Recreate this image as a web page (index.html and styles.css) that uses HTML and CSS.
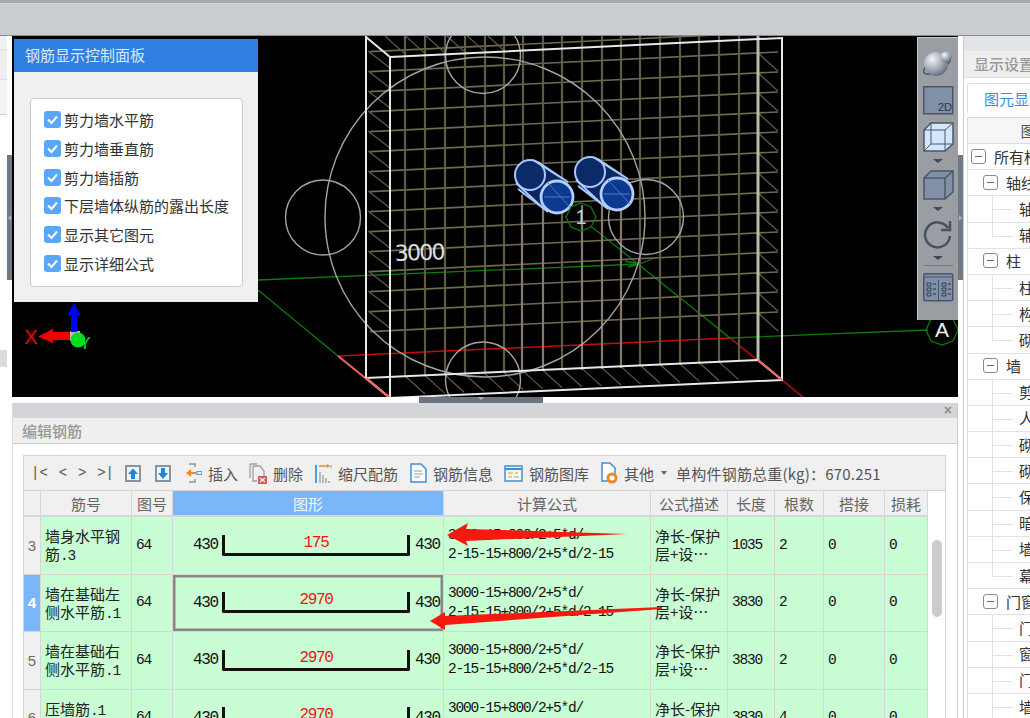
FILE: index.html
```html
<!DOCTYPE html>
<html lang="zh-CN">
<head>
<meta charset="utf-8">
<title>编辑钢筋</title>
<link rel="stylesheet" href="styles.css">
</head>
<body>
<div class="app">
  <div class="topbar"></div>
  <div class="main">
    <div class="rail">
      <div class="rail-a"></div><div class="rail-b"></div><div class="rail-c"></div>
      <div class="rail-d"></div><div class="rail-e"></div><div class="rail-f"></div>
    </div>
    <div class="vsplit"><div class="vhandle"><i class="tri-l"></i></div></div>
    <div class="center">
      <div class="viewport">
        <svg class="scene" viewBox="12 36 946 361" width="946" height="361">
          <defs>
            <g id="cyl">
              <polygon points="538,162 568,182 548,212 518,189" fill="#0b2660"/>
              <circle cx="530" cy="175" r="15" fill="#0c2a68" stroke="#a9c8ff" stroke-width="2"/>
              <path d="M538 162L568 182M518 189L548 212M533 160L563 179M516 183L544 209" stroke="#a9c8ff" stroke-width="1.800" fill="none"/>
              <circle cx="557" cy="197" r="16" fill="#0d3a90" stroke="#b2cffc" stroke-width="2.800"/>
              <path d="M548 183L570 207M544 197H570" stroke="#4f74c0" stroke-width="1" fill="none"/>
            </g>
            <radialGradient id="ball" cx=".35" cy=".3" r=".8">
              <stop offset="0" stop-color="#f4f6f8"/><stop offset=".6" stop-color="#98a2b0"/><stop offset="1" stop-color="#56606e"/>
            </radialGradient>
          </defs>
          <path class="g-red" d="M338 356L730 338M730 338L803 397"/>
          <path class="g-pink" d="M338 356L390 398"/>
          <path class="g-green" d="M258 280L640 264M258 290L338 356M592 227L730 338L928 330M628 267L640 264L625 261M640 264L652 259"/>
          <path class="g-bar" d="M370 51.6l408-19.6m-408 39.6l408-19.6m-408 39.6l408-19.6m-408 39.6l408-19.6m-408 39.6l408-19.6m-408 39.6l408-19.6m-408 39.6l408-19.6m-408 39.6l408-19.6m-408 39.6l408-19.6m-408 39.6l408-19.6m-408 39.6l408-19.6m-408 39.6l408-19.6m-408 39.6l408-19.6m-408 39.6l408-19.6m-408 39.6l408-19.6"/>
          <path class="g-thin" d="M368 51l22 17m-22 3l22 17m-22 3l22 17m-22 3l22 17m-22 3l22 17m-22 3l22 17m-22 3l22 17m-22 3l22 17m-22 3l22 17m-22 3l22 17m-22 3l22 17m-22 3l22 17m-22 3l22 17m-22 3l22 17M758 53l20 18m-20 2l20 18m-20 2l20 18m-20 2l20 18m-20 2l20 18m-20 2l20 18m-20 2l20 18m-20 2l20 18m-20 2l20 18m-20 2l20 18m-20 2l20 18m-20 2l20 18m-20 2l20 18m-20 2l20 18M385 36l20 18m-.4-18.9l20 18m-.4-18.9l20 18m-.4-18.9l20 18m-.4-18.9l20 18m-.4-18.9l20 18M405 376l20 18m-.4-18.9l20 18m-.4-18.9l20 18m-.4-18.9l20 18m-.4-18.9l20 18m-.4-18.9l20 18m-.4-18.9l20 18m-.4-18.9l20 18m-.4-18.9l20 18m-.4-18.9l20 18m-.4-18.9l20 18m-.4-18.9l20 18m-.4-18.9l20 18m-.4-18.9l20 18m-.4-18.9l20 18m-.4-18.9l20 18m-.4-18.9l20 18"/>
          <path class="g-vert" d="M405 36V376M425 36V375M445 36V374M465 36V373M485 36V372M504 36V371M562 36V368M640 36V365M660 36V364M680 36V363M699 36V362M719 36V361M739 36V360M523 36V195M543 36V195M582 36V190M602 36V190M621 36V210"/>
          <path class="g-pale" d="M522 195V372M543 205V371M582 205V370M602 205V369M621 210V368"/>
          <path class="g-side" d="M758 36V360"/>
          <g class="g-circ">
            <circle cx="485" cy="217" r="160"/>
            <circle cx="323" cy="217.5" r="37.5"/>
            <circle cx="483" cy="56" r="37.5"/>
            <circle cx="483" cy="379.5" r="37.5"/>
            <circle cx="646" cy="217" r="37.5"/>
          </g>
          <path class="g-box" d="M390 57L782 38V380L390 398ZM366 36V378L758 360M366 37L390 57M366 378L390 398M758 360L782 380"/>
          <path class="g-pink" d="M366 378L390 398M758 360L782 380"/>
          <use href="#cyl"/>
          <use href="#cyl" x="60" y="-3"/>
          <polygon class="g-ring" points="581,203 591,207 596,217 591,227 581,231 571,227 566,217 571,207"/>
          <text class="t-one" x="581" y="224">1</text>
          <text class="t-dim" x="395" y="261" transform="rotate(-2 395 261)">3000</text>
          <polygon class="g-ring" points="942,315 953,319 958,330 953,341 942,345 931,341 926,330 931,319"/>
          <text class="t-a" x="942" y="337">A</text>
          <rect x="70" y="331" width="10" height="10" fill="#b9b9b9"/>
          <path d="M70 332H53V329L38 336.500L53 343V340H70Z" fill="#f20000"/>
          <path d="M71 332V315H67.500L74 303L80.500 315H77V332Z" fill="#0000f0"/>
          <circle cx="78" cy="340" r="7.500" fill="#00e020"/>
          <text class="t-x" x="31" y="344">X</text>
          <text class="t-y" x="85" y="349">Y</text>
        </svg>
        <section class="ctrl">
          <h2 class="ctrl-title">钢筋显示控制面板</h2>
          <div class="ctrl-body">
            <div class="ctrl-box">
              <label class="ck"><span class="ck-box"><svg viewBox="0 0 17 17"><path d="M4 8.500L7.500 12L13 5.500"/></svg></span>剪力墙水平筋</label>
              <label class="ck"><span class="ck-box"><svg viewBox="0 0 17 17"><path d="M4 8.500L7.500 12L13 5.500"/></svg></span>剪力墙垂直筋</label>
              <label class="ck"><span class="ck-box"><svg viewBox="0 0 17 17"><path d="M4 8.500L7.500 12L13 5.500"/></svg></span>剪力墙插筋</label>
              <label class="ck"><span class="ck-box"><svg viewBox="0 0 17 17"><path d="M4 8.500L7.500 12L13 5.500"/></svg></span>下层墙体纵筋的露出长度</label>
              <label class="ck"><span class="ck-box"><svg viewBox="0 0 17 17"><path d="M4 8.500L7.500 12L13 5.500"/></svg></span>显示其它图元</label>
              <label class="ck"><span class="ck-box"><svg viewBox="0 0 17 17"><path d="M4 8.500L7.500 12L13 5.500"/></svg></span>显示详细公式</label>
            </div>
          </div>
        </section>
        <aside class="tools">
          <svg class="ti ti-a" viewBox="0 0 34 30" width="34" height="30">
            <ellipse cx="16" cy="17" rx="15" ry="6" fill="none" stroke="#4b5563" stroke-width="1.500" transform="rotate(-30 16 17)"/>
            <circle cx="15" cy="16" r="12" fill="url(#ball)"/>
            <circle cx="25" cy="9" r="5.500" fill="url(#ball)"/>
          </svg>
          <svg class="ti ti-b" viewBox="0 0 31 29" width="31" height="29">
            <rect x=".75" y=".75" width="29" height="27" fill="#8090a8" stroke="#4c5666" stroke-width="1.500"/>
            <text class="t-2d" x="15" y="25">2D</text>
          </svg>
          <svg class="ti ti-c" viewBox="0 0 31 30" width="31" height="30">
            <path d="M1 8L8 1H30V22L22 29H1Z" fill="#d3e6fc" stroke="#4c5666" stroke-width="1.500"/>
            <path d="M1 8H22V29M22 8L30 1M8 1V22H30M8 22L1 29" fill="none" stroke="#4c5666" stroke-width="1"/>
          </svg>
          <i class="tri-d"></i>
          <svg class="ti ti-d" viewBox="0 0 31 30" width="31" height="30">
            <path d="M1 8L8 1H30V22L22 29H1Z" fill="#8090a8" stroke="#4c5666" stroke-width="1.500"/>
            <path d="M1 8H22V29M22 8L30 1" fill="none" stroke="#4c5666" stroke-width="1.500"/>
          </svg>
          <i class="tri-d"></i>
          <svg class="ti ti-e" viewBox="0 0 30 30" width="30" height="30">
            <path d="M25 9A12.500 12.500 0 1 0 27 17" fill="none" stroke="#475160" stroke-width="2.500"/>
            <path d="M27 2V11H18" fill="none" stroke="#475160" stroke-width="2.500"/>
          </svg>
          <i class="tri-d"></i>
          <div class="tools-rule"></div>
          <svg class="ti ti-f" viewBox="0 0 31 29" width="31" height="29">
            <rect x=".75" y=".75" width="29" height="27" rx="1.500" fill="#8090a8" stroke="#4c5666" stroke-width="1.500"/>
            <path d="M1 4H30M15.500 7V27" stroke="#4c5666" stroke-width="1" fill="none"/>
            <path d="M4 10h4v3h-4zM4 15h4v3h-4zM4 20h4v3h-4zM19 10h4v3h-4zM19 15h4v3h-4zM19 20h4v3h-4z" fill="none" stroke="#27303c" stroke-width=".8"/>
            <path d="M10 11h3M10 16h3M10 21h3M25 11h3M25 16h3M25 21h3" stroke="#27303c" stroke-width="1"/>
          </svg>
        </aside>
      </div>
      <div class="hsplit"><div class="hhandle"><i class="tri-s"></i></div></div>
      <section class="editor">
        <div class="ed-strip"><span class="ed-close">×</span></div>
        <h2 class="ed-head">编辑钢筋</h2>
        <div class="ed-body">
          <div class="sheet">
            <div class="sheet-bar">
              <div class="nav"><span>|&lt;</span><span>&lt;</span><span>&gt;</span><span>&gt;|</span></div>
              <svg class="ib" viewBox="0 0 16 17" width="16" height="17"><rect x="1" y="1" width="14" height="15" fill="#eef3f8" stroke="#8a939b" stroke-width="2"/><path d="M8 3.500L3 9H6V14H10V9H13Z" fill="#1f86d8"/></svg>
              <svg class="ib" viewBox="0 0 16 17" width="16" height="17"><rect x="1" y="1" width="14" height="15" fill="#eef3f8" stroke="#8a939b" stroke-width="2"/><path d="M8 14L3 8H6V3H10V8H13Z" fill="#1f86d8"/></svg>
              <span class="bt"><svg viewBox="0 0 17 20" width="17" height="20"><path d="M4 1H10V4M4 19H10V16" fill="none" stroke="#8c949c" stroke-width="1.500"/><path d="M1 10L6 6V9H11V11H6V14Z" fill="#f08a1e"/><path d="M12 8.500H17V11.500H12Z" fill="none" stroke="#4a9fe0" stroke-width="1.200"/></svg>插入</span>
              <span class="bt"><svg viewBox="0 0 18 21" width="18" height="21"><path d="M4 3H11L15 8V13M4 3V18H8" fill="none" stroke="#9aa0a6" stroke-width="1.300"/><path d="M1 1H8M1 1V15" fill="none" stroke="#9aa0a6" stroke-width="1.300"/><rect x="9" y="13" width="9" height="8" fill="#e25555"/><path d="M11 15L16 19M16 15L11 19" stroke="#fff" stroke-width="1.200"/></svg>删除</span>
              <span class="bt"><svg viewBox="0 0 18 20" width="18" height="20"><path d="M2 2V20" stroke="#4a9fe0" stroke-width="2"/><path d="M5 3H15" stroke="#f08a1e" stroke-width="1.500"/><path d="M13 1L16 3L13 5" fill="#f08a1e"/><path d="M17 2V5" stroke="#4a9fe0"/><path d="M6 9V20M9 12V20M12 15V20M15 18V20" stroke="#a0a6ac" stroke-width="1.500"/></svg>缩尺配筋</span>
              <span class="bt"><svg viewBox="0 0 18 20" width="18" height="20"><path d="M2 1H12L17 6V19H2Z" fill="#f8fbff" stroke="#3f8fd8" stroke-width="1.500"/><path d="M5 8H13M5 11H14M5 14H11" stroke="#9aa0a6"/></svg>钢筋信息</span>
              <span class="bt"><svg viewBox="0 0 19 17" width="19" height="17"><rect x="1" y="1" width="17" height="15" fill="#f8f6e8" stroke="#3f8fd8" stroke-width="1.500"/><path d="M1 4H18" stroke="#3f8fd8" stroke-width="2"/><path d="M4 8H9M11 8H14" stroke="#c9a24a"/><path d="M4 12H8M10 12H15" stroke="#8aa8c8"/></svg>钢筋图库</span>
              <span class="bt"><svg viewBox="0 0 18 22" width="18" height="22"><path d="M2 1H10L15 6V19H2Z" fill="#fff" stroke="#3f8fd8" stroke-width="1.500"/><circle cx="12" cy="16" r="4" fill="#fff" stroke="#f08a1e" stroke-width="3"/></svg>其他<i class="caret"></i></span>
              <span class="total">单构件钢筋总重(kg)：670.251</span>
            </div>
            <div class="sheet-grid">
              <div class="grid">
                <div class="hd"></div><div class="hd">筋号</div><div class="hd">图号</div><div class="hd hd-on">图形</div><div class="hd">计算公式</div><div class="hd">公式描述</div><div class="hd">长度</div><div class="hd">根数</div><div class="hd">搭接</div><div class="hd">损耗</div>

                <div class="rn">3</div><div class="c name">墙身水平钢筋<span class="lat">.3</span></div><div class="c lat">64</div>
                <div class="c shape"><span class="dim">430</span><div class="bk">175</div><span class="dim">430</span></div>
                <div class="c lat">3000-15+800/2+5*d/<br>2-15-15+800/2+5*d/2-15</div><div class="c name">净长-保护<br>层+设…</div>
                <div class="c lat">1035</div><div class="c lat">2</div><div class="c lat">0</div><div class="c lat">0</div>

                <div class="rn rn-on">4</div><div class="c name">墙在基础左侧水平筋<span class="lat">.1</span></div><div class="c lat">64</div>
                <div class="c shape shape-on"><span class="dim">430</span><div class="bk">2970</div><span class="dim">430</span></div>
                <div class="c lat">3000-15+800/2+5*d/<br>2-15-15+800/2+5*d/2-15</div><div class="c name">净长-保护<br>层+设…</div>
                <div class="c lat">3830</div><div class="c lat">2</div><div class="c lat">0</div><div class="c lat">0</div>

                <div class="rn">5</div><div class="c name">墙在基础右侧水平筋<span class="lat">.1</span></div><div class="c lat">64</div>
                <div class="c shape"><span class="dim">430</span><div class="bk">2970</div><span class="dim">430</span></div>
                <div class="c lat">3000-15+800/2+5*d/<br>2-15-15+800/2+5*d/2-15</div><div class="c name">净长-保护<br>层+设…</div>
                <div class="c lat">3830</div><div class="c lat">2</div><div class="c lat">0</div><div class="c lat">0</div>

                <div class="rn">6</div><div class="c name">压墙筋<span class="lat">.1</span></div><div class="c lat">64</div>
                <div class="c shape"><span class="dim">430</span><div class="bk">2970</div><span class="dim">430</span></div>
                <div class="c lat">3000-15+800/2+5*d/<br>2-15-15+800/2+5*d/2-15</div><div class="c name">净长-保护<br>层+设…</div>
                <div class="c lat">3830</div><div class="c lat">4</div><div class="c lat">0</div><div class="c lat">0</div>
              </div>
              <div class="vscroll"><div class="thumb"></div></div>
            </div>
          </div>
        </div>
      </section>
    </div>
    <div class="vsplit"><div class="vhandle"><i class="tri-r"></i></div></div>
    <aside class="right">
      <div class="r-band"></div>
      <h2 class="r-head">显示设置</h2>
      <div class="r-tab">图元显示</div>
      <div class="tree">
        <div class="t-hd">图元</div>
        <div class="t-row l1"><i class="box"></i>所有构件</div>
        <div class="t-row l2 vl"><i class="box"></i>轴线</div>
        <div class="t-row l3">轴网</div>
        <div class="t-row l3 end">辅助轴线</div>
        <div class="t-row l2 vl"><i class="box"></i>柱</div>
        <div class="t-row l3">柱</div>
        <div class="t-row l3">构造柱</div>
        <div class="t-row l3 end">砌体柱</div>
        <div class="t-row l2 vl"><i class="box"></i>墙</div>
        <div class="t-row l3">剪力墙</div>
        <div class="t-row l3">人防门框墙</div>
        <div class="t-row l3">砌体墙</div>
        <div class="t-row l3">砌体加筋</div>
        <div class="t-row l3">保温层</div>
        <div class="t-row l3">暗梁</div>
        <div class="t-row l3">墙垛</div>
        <div class="t-row l3 end">幕墙</div>
        <div class="t-row l2 vl"><i class="box"></i>门窗洞</div>
        <div class="t-row l3">门</div>
        <div class="t-row l3">窗</div>
        <div class="t-row l3">门联窗</div>
        <div class="t-row l3">墙洞</div>
      </div>
    </aside>
  </div>
  <svg class="marks" viewBox="0 0 1030 718" width="1030" height="718">
    <polygon points="447,535 468,523 466,529 627,534 466,541 468,546"/>
    <polygon points="430,621 445,612 445,616 662,607 662,609 445,625 445,630"/>
  </svg>
</div>
</body>
</html>
```
FILE: styles.css
```css
* { box-sizing: border-box; }
html, body { margin: 0; padding: 0; background: #fff; }
body { font-family: "Noto Sans CJK SC", "Noto Sans", sans-serif; color: #333; }
h2 { margin: 0; font-weight: 400; }
i { display: block; }

.app { position: relative; width: 1030px; height: 718px; overflow: hidden; display: flex; flex-direction: column; }

.topbar { height: 36px; flex: none; background: #c9ccd0; border-top: 3px solid #a6a9ac; border-bottom: 1px solid #8a8d90; box-shadow: inset 0 1px 0 #d8dadc; }
.main { flex: 1; display: flex; min-height: 0; }

.rail { width: 7px; flex: none; display: flex; flex-direction: column; }
.rail-a { height: 14px; background: #f0f0f0; border-bottom: 1px solid #ddd; }
.rail-b { height: 30px; background: #eee; border-bottom: 1px solid #ddd; }
.rail-c { height: 35px; background: #f4f4f4; border-bottom: 1px solid #ccc; }
.rail-d { height: 236px; background: #fff; border-bottom: 1px solid #ddd; }
.rail-e { height: 16px; background: #d9dbde; }
.rail-f { flex: 1; background: #fff; }

.vsplit { width: 5px; flex: none; display: flex; align-items: flex-start; background: #fff; }
.vhandle { width: 5px; height: 125px; margin-top: 119px; background: #6f7a85; display: flex; align-items: center; justify-content: center; }
.tri-l { border: 3px solid transparent; border-right-color: #aab2ba; border-left-width: 0; }
.tri-r { border: 3px solid transparent; border-left-color: #aab2ba; border-right-width: 0; }

.center { width: 946px; flex: none; display: flex; flex-direction: column; min-height: 0; }
.viewport { position: relative; height: 361px; flex: none; background: #000; overflow: hidden; }
.scene { display: block; }
.g-red { fill: none; stroke: #c80a0a; stroke-width: 1.5; }
.g-pink { fill: none; stroke: #f06464; stroke-width: 2; }
.g-green { fill: none; stroke: #0c7a0c; stroke-width: 1.3; }
.g-bar { fill: none; stroke: #6d6a50; stroke-width: 1.6; }
.g-thin { fill: none; stroke: #5e5b46; stroke-width: 1.2; }
.g-vert { fill: none; stroke: #5f5c46; stroke-width: 2.2; }
.g-pale { fill: none; stroke: #85796f; stroke-width: 2.2; }
.g-side { fill: none; stroke: #bdbaa8; stroke-width: 3; }
.g-circ circle { fill: none; stroke: #a4a4a4; stroke-width: 1.4; }
.g-box { fill: none; stroke: #e8e8e8; stroke-width: 2; }
.g-ring { fill: none; stroke: #0c7a0c; stroke-width: 1.3; }
.t-one { font: 20px "Liberation Sans", sans-serif; fill: #ccc; text-anchor: middle; }
.t-dim { font: 22px "DejaVu Sans", sans-serif; fill: #e0e0e0; letter-spacing: -1.700px; }
.t-a { font: 21px "Liberation Sans", sans-serif; fill: #eee; text-anchor: middle; }
.t-x { font: 20px "Liberation Sans", sans-serif; fill: #f20000; text-anchor: middle; }
.t-y { font: 17px "Liberation Sans", sans-serif; fill: #00e020; text-anchor: middle; }
.t-2d { font: 11px "Liberation Sans", sans-serif; fill: #2b3440; }

.ctrl { position: absolute; left: 2px; top: 3px; width: 244px; height: 263px; background: #f0f0f0; }
.ctrl-title { height: 33px; padding-left: 11px; background: #2f80e0; color: #dce9fb; font-size: 15px; line-height: 32px; }
.ctrl-body { padding: 26px 15px 0 16px; }
.ctrl-box { height: 189px; padding: 10px 0 0 13px; background: #fff; border: 1px solid #ccc; border-radius: 4px; display: flex; flex-direction: column; gap: 7.800px; }
.ck { display: flex; align-items: center; gap: 3px; height: 21px; font-size: 15px; color: #333; white-space: nowrap; }
.ck-box { width: 17px; height: 17px; flex: none; background: #5aa6f8; border-radius: 3px; }
.ck-box svg { display: block; width: 17px; height: 17px; fill: none; stroke: #fff; stroke-width: 2; }

.tools { position: absolute; right: 0; top: 1px; width: 41px; height: 283px; background: #9a9ea3; border-top: 1px solid #c8cacc; border-left: 1px solid #c8cacc; display: flex; flex-direction: column; align-items: center; }
.ti { display: block; flex: none; }
.ti-a { margin-top: 10px; }
.ti-b { margin-top: 8px; }
.ti-c { margin-top: 7px; }
.ti-d { margin-top: 7px; }
.ti-e { margin-top: 8px; }
.ti-f { margin-top: 7px; }
.tri-d { margin-top: 7px; border: 5px solid transparent; border-top: 4px solid #3f4854; border-bottom: 0; }
.tools-rule { width: 29px; height: 1px; margin-top: 5px; background: #72777e; }

.hsplit { height: 6px; flex: none; background: #fff; display: flex; justify-content: center; padding-right: 8px; }
.hhandle { width: 124px; height: 6px; background: #6a7480; display: flex; justify-content: center; }
.tri-s { border: 3px solid transparent; border-top-color: #aab2ba; border-bottom: 0; }

.editor { flex: 1; min-height: 0; display: flex; flex-direction: column; border-left: 1px solid #ddd; border-right: 1px solid #ccc; }
.ed-strip { height: 15px; flex: none; background: #d3d5d8; text-align: right; padding-right: 5px; }
.ed-close { display: block; font: bold 14px/15px "Liberation Sans", sans-serif; color: #8a8d90; }
.ed-head { height: 26px; flex: none; padding-left: 9px; background: #efefef; border-bottom: 1px solid #ccc; color: #999; font-size: 15px; line-height: 25px; font-weight: 500; }
.ed-body { flex: 1; min-height: 0; padding: 11px 11px 0 10px; background: #fff; }
.sheet { height: 280px; border: 1px solid #d4d4d4; border-bottom: 0; }

.sheet-bar { height: 35px; display: flex; align-items: center; gap: 11px; padding-left: 6px; background: #f0f0f0; border-bottom: 1px solid #d4d4d4; font-size: 15px; color: #555; white-space: nowrap; }
.nav { width: 83px; margin-left: 1px; display: flex; justify-content: space-between; font: 14px "Liberation Mono", monospace; color: #555; }
.ib { flex: none; margin-right: 3px; }
.bt { display: flex; align-items: center; gap: 6px; }
.bt svg { flex: none; }
.caret { margin-left: 1px; border: 3.500px solid transparent; border-top: 4px solid #666; border-bottom: 0; }
.total { margin-left: -2px; letter-spacing: .2px; }

.sheet-grid { display: flex; overflow: hidden; height: 262px; }
.grid { width: 904px; flex: none; display: grid; grid-template-columns: 17px 91px 41px 271px 207px 77px 47px 49px 61px 43px; grid-template-rows: 26px repeat(4, 57.500px); }
.hd { background: #f0f0f0; border-right: 1px solid #d6d6d6; border-bottom: 2px solid #d6d6d6; display: flex; align-items: center; justify-content: center; font-size: 15px; color: #666; line-height: 1; }
.hd-on { background: #7ab6f8; color: #eef6ff; }
.rn { background: #f0f0f0; border-right: 1px solid #d6d6d6; border-bottom: 1px solid #d6d6d6; display: flex; align-items: center; justify-content: center; font: 15px "Liberation Sans", sans-serif; color: #776a60; }
.rn-on { background: #7ab6f8; color: #fff; font-weight: 700; }
.c { background: #c9fdd3; border-right: 1px solid #d6d6d6; border-bottom: 1px solid #d6d6d6; display: flex; flex-direction: column; justify-content: center; align-items: flex-start; padding: 0 3px 0 4px; color: #111; font-size: 15px; line-height: 18px; min-width: 0; }
.c.name { display: block; padding-top: 10px; color: #222; }
.lat { font-family: "Liberation Mono", monospace; font-size: 14.500px; letter-spacing: -1.200px; }
.c.lat { line-height: 19px; }
.shape { flex-direction: row; justify-content: flex-start; align-items: center; padding: 0 0 0 20px; gap: 5px; letter-spacing: 0; }
.shape-on { box-shadow: inset 0 0 0 2.500px #888; }
.dim { width: 24px; font: 16px "Liberation Mono", monospace; letter-spacing: -1.300px; color: #111; flex: none; }
.bk { width: 188px; height: 21px; flex: none; border: 3px solid #111; border-top: 0; border-radius: 0 0 2px 2px; text-align: center; font: 16px/17px "Liberation Mono", monospace; letter-spacing: -1.300px; color: #f01414; }
.vscroll { flex: 1; background: #fff; padding: 49px 4px 0 4px; }
.thumb { width: 10px; height: 77px; background: #ccc; border-radius: 5px; }

.right { flex: 1; min-width: 0; display: flex; flex-direction: column; overflow: hidden; border-left: 1px solid #ccc; }
.r-band { height: 15px; flex: none; background: #e2e4e6; }
.r-head { height: 27px; flex: none; padding-left: 10px; background: #eee; border-bottom: 1px solid #ddd; color: #999; font-size: 15px; line-height: 26px; font-weight: 500; white-space: nowrap; }
.r-tab { height: 30px; flex: none; margin: 5px 0 4px 3px; padding-left: 16px; border: 1px solid #ddd; border-bottom: 0; border-right: 0; border-radius: 3px 0 0 0; color: #3a8ee6; font-size: 15px; line-height: 30px; white-space: nowrap; }
.tree { margin-left: 3px; width: 136px; flex: 1; border-left: 1px solid #ddd; border-top: 1px solid #ddd; font-size: 15px; color: #333; white-space: nowrap; }
.t-hd { height: 26px; background: #f6f6f6; border-bottom: 1px solid #ddd; text-align: center; line-height: 25px; color: #555; }
.t-row { height: 26.200px; border-bottom: 1px solid #e2e2e2; display: flex; align-items: center; line-height: 1; padding-bottom: 1px; }
.box { width: 15px; height: 15px; flex: none; margin-right: 8px; border: 1px solid #888; border-radius: 3px; background: linear-gradient(#666, #666) center / 7px 1px no-repeat #fff; }
.l1 { padding-left: 3px; }
.l2 { padding-left: 15px; }
.l3 { padding-left: 51px; background: linear-gradient(#e2e2e2, #e2e2e2) 24px 0 / 1px 100% no-repeat, linear-gradient(#e2e2e2, #e2e2e2) 24px 13px / 21px 1px no-repeat; }
.l3.end { background: linear-gradient(#e2e2e2, #e2e2e2) 24px 0 / 1px 14px no-repeat, linear-gradient(#e2e2e2, #e2e2e2) 24px 13px / 21px 1px no-repeat; }

.marks { position: absolute; left: 0; top: 0; pointer-events: none; }
.marks polygon { fill: #f5190f; }
```
